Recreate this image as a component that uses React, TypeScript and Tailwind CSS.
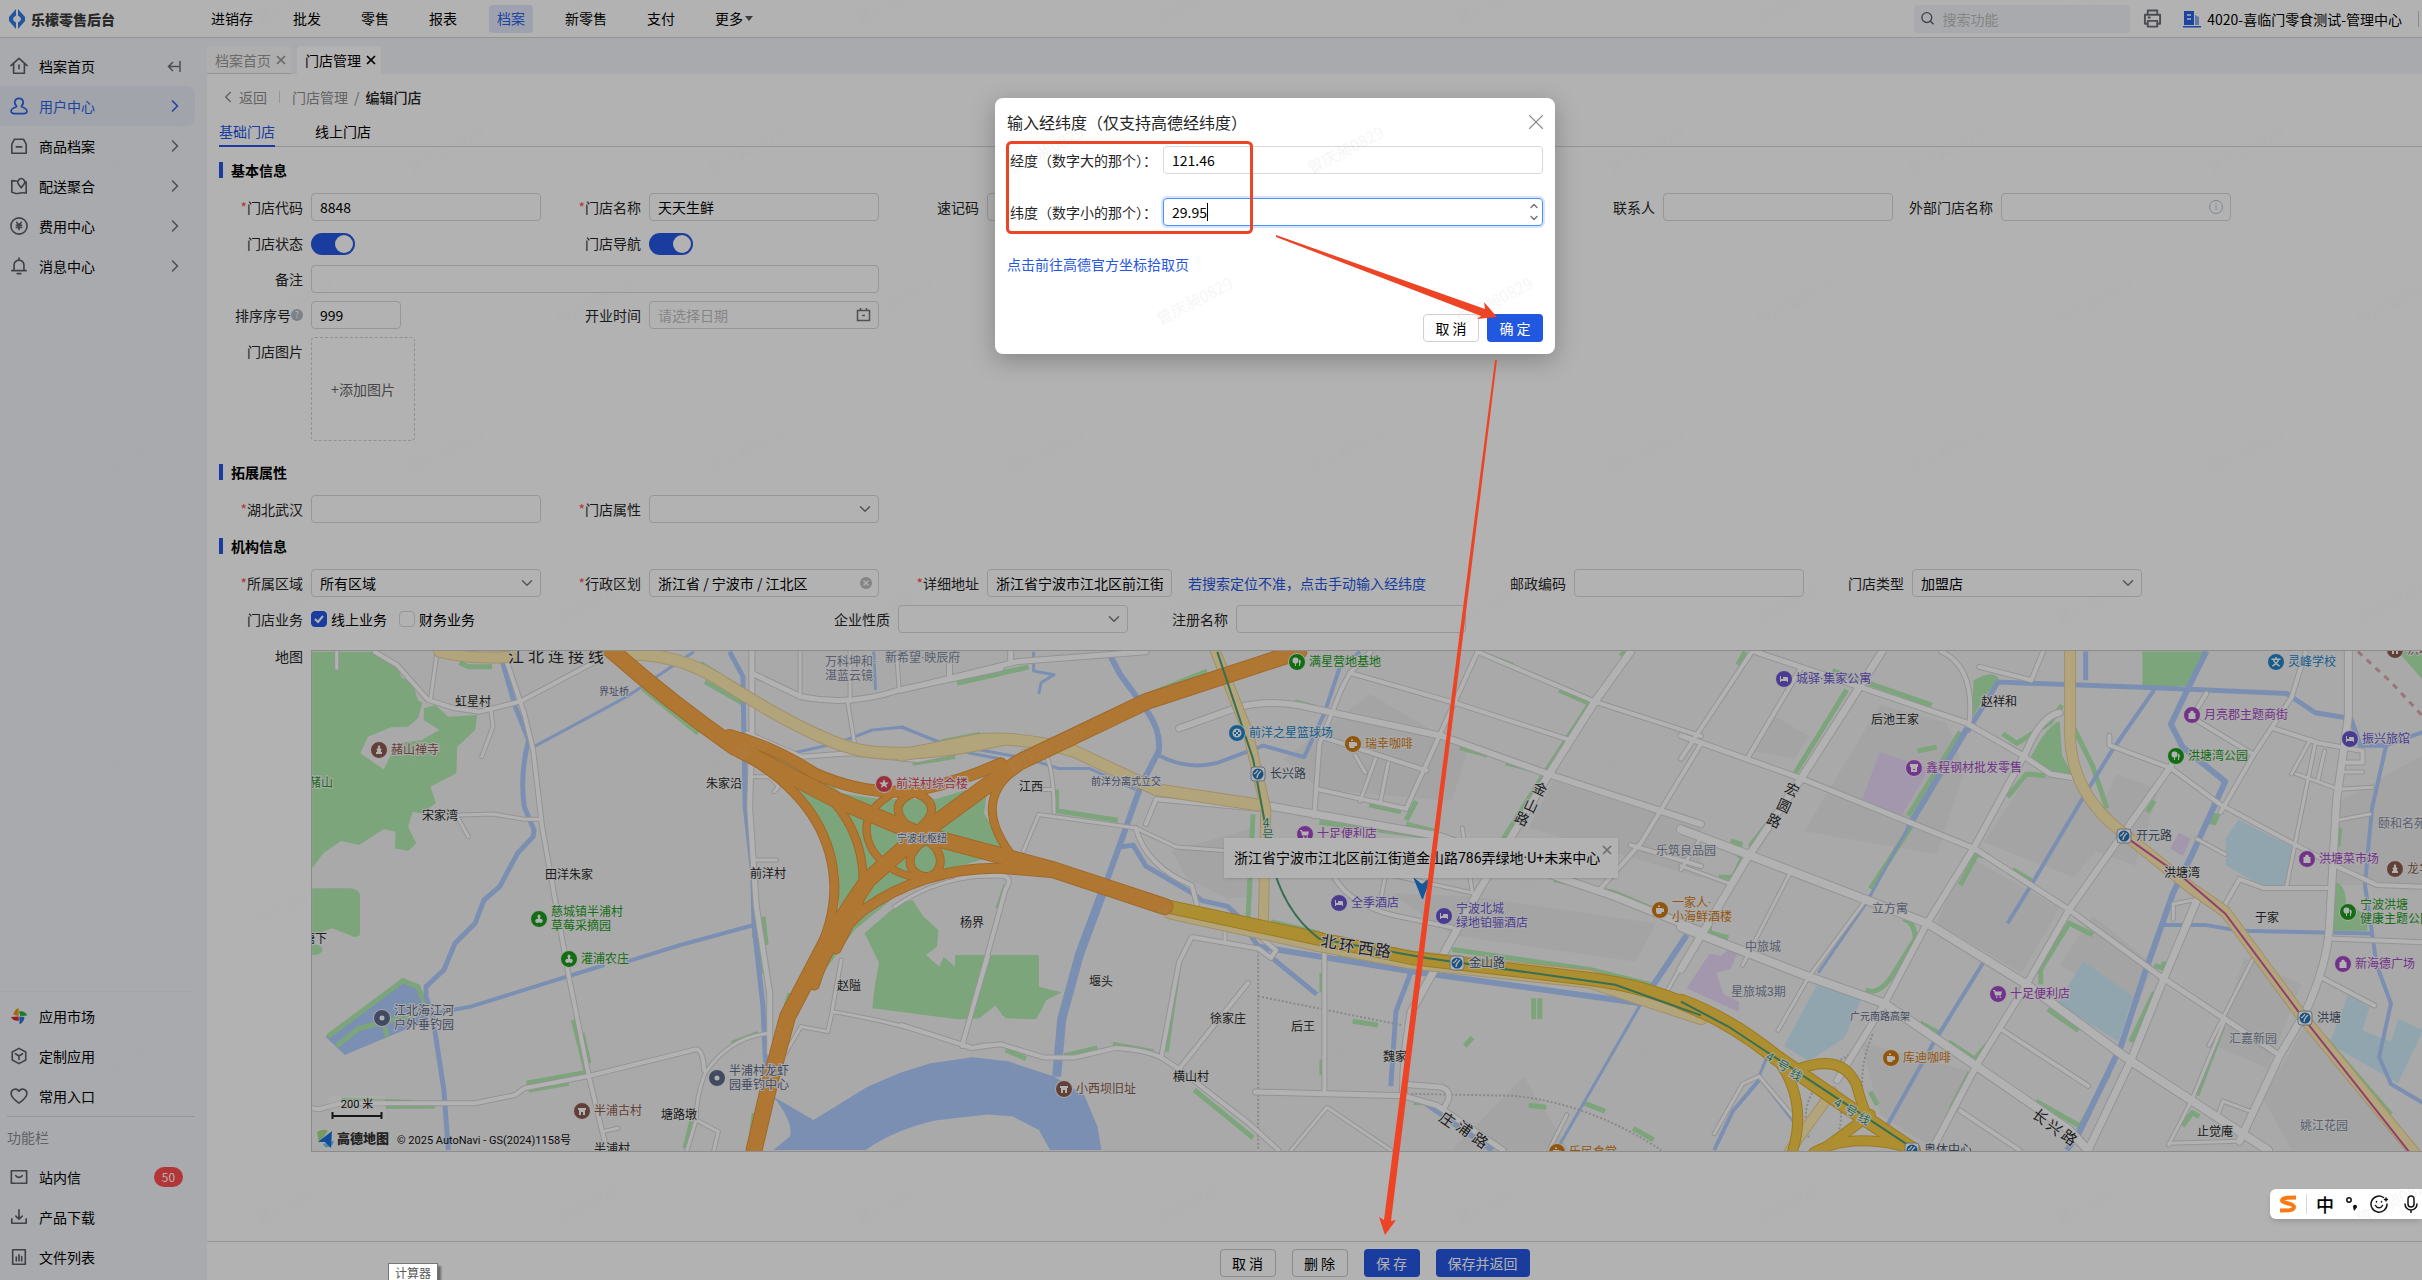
import { useId, useState } from 'react';
import type { ReactNode } from 'react';
import clsx from 'clsx';
import { ChevronDown, ChevronLeft, ChevronRight, ChevronUp, X } from 'lucide-react';

const NAV = ['进销存', '批发', '零售', '报表', '档案', '新零售', '支付'];

type IconName =
  | 'home' | 'user' | 'goods' | 'delivery' | 'fee' | 'bell'
  | 'market' | 'custom' | 'heart' | 'mail' | 'download' | 'files';

const ICONS: Record<IconName, ReactNode> = {
  home: <path d="M1 9.500 10 1.500l9 8M4 7.500V18h12V7.500M10 9v4" />,
  user: <path d="M10 1.500a4.600 4.600 0 0 1 3 8.200c-.6.600-.4 1 .4 1.300C17 12.200 18.800 13.800 18.800 15.800c0 1.800-1.500 2.700-3.800 2.700H5c-2.300 0-3.800-.9-3.800-2.700 0-2 1.800-3.600 5.400-4.800.8-.3 1-.7.4-1.300a4.600 4.600 0 0 1 3-8.200Z" />,
  goods: <path d="M5 2.500h10L18 8v10H2V8ZM7 11h6" />,
  delivery: <path d="M7 4.500 2 4v13c3 .5 5 2 8 1s5-.5 8 0V5.500h-1.500M12.500 12 9.500 8a3.800 3.800 0 1 1 6 0Z" />,
  fee: <path d="M10 1a9 9 0 1 1 0 18 9 9 0 0 1 0-18ZM7.500 6 10 9l2.500-3M7 9.300h6M7 11.600h6M10 9v5" />,
  bell: <path d="M4.500 15V9a5.500 5.500 0 0 1 11 0v6M2 15.200h16M10 1.200v2M8 18.500h4" />,
  market: (
    <g stroke="none">
      <path fill="#e89a14" d="M9.500 1v9L4 8.500C4 5 6.500 2 9.500 1Z" />
      <path fill="#2fae35" d="M10 5c4-1 8 1 9 4.500L11.500 10Z" />
      <path fill="#2779d6" d="M10.500 10.500 16 11c0 4-2.500 7-5.500 8Z" />
      <path fill="#dc2a2a" d="M1 11l8.500-.5L10 15C6 16 2.500 14 1 11Z" />
    </g>
  ),
  custom: <path d="M10 1.500 17.500 5.500v9L10 18.500 2.500 14.500v-9ZM6 7.500l4 2.500 4-2.500M10 10v4" />,
  heart: <path d="M10 18C5 14.500 1.200 11 1.200 7.300c0-5.200 6.300-6.500 8.800-2.600 2.500-3.900 8.800-2.600 8.800 2.600C18.800 11 15 14.500 10 18Z" />,
  mail: <path d="M1.500 3h17v14h-17ZM6.500 8.500c2 2.500 5 2.500 7 0" />,
  download: <path d="M10 2v10M6.500 9l3.500 3.500L13.500 9M2 12v5h16v-5" />,
  files: <path d="M3 2h14v16H3ZM7 10v4.500M10 7.500v7M13 9.500v5" />,
};

function SideIcon({ name }: { name: IconName }) {
  return (
    <svg className="h-[18px] w-[18px]" viewBox="0 0 20 20" fill="none" stroke="currentColor" strokeWidth="1.800" strokeLinejoin="round" strokeLinecap="round">
      {ICONS[name]}
    </svg>
  );
}

function SideItem({ icon, text, active, children }: { icon: IconName; text: string; active?: boolean; children?: ReactNode }) {
  return (
    <a href="#" className={clsx('mr-3 flex h-10 items-center rounded-r-lg px-[10px]', active ? 'bg-[#e9ebf7] text-[#2a62e6]' : 'text-black')}>
      <span className={clsx('mr-[11px]', !active && 'text-[#5b5e69]')}>
        <SideIcon name={icon} />
      </span>
      <span className="flex-1">{text}</span>
      {children}
    </a>
  );
}

function Field({ label, required, className, hint, children }: {
  label: string;
  required?: boolean;
  className?: string;
  hint?: boolean;
  children: (id: string) => ReactNode;
}) {
  const id = useId();
  return (
    <div className={clsx('flex', className ?? 'w-[322px]')}>
      <label htmlFor={id} className="mr-2 flex h-7 w-[84px] shrink-0 items-center justify-end whitespace-nowrap text-[#262626]">
        {required && <span className="text-[#ff4d4f]">*</span>}
        {label}
        {hint && <span className="flex h-3 w-3 items-center justify-center rounded-full bg-[#b4bac6] text-[9px] leading-3 text-white">?</span>}
      </label>
      {children(id)}
    </div>
  );
}

const inputCls = 'h-7 w-full min-w-0 rounded border border-[#d9d9d9] bg-white px-2 text-black outline-none placeholder:text-[#bfbfbf]';

function SelectBox({ id, value }: { id: string; value: string }) {
  return (
    <div className="relative min-w-0 flex-1">
      <select id={id} className={clsx(inputCls, 'appearance-none')} defaultValue={value}>
        <option>{value}</option>
      </select>
      <ChevronDown className="pointer-events-none absolute top-[5px] right-[5px] h-[18px] w-[18px] text-[#7a7a7a]" />
    </div>
  );
}

function Toggle({ id }: { id: string }) {
  const [on, setOn] = useState(true);
  return (
    <button
      id={id}
      type="button"
      role="switch"
      aria-checked={on}
      onClick={() => setOn(!on)}
      className={clsx('mt-1 flex h-[22px] w-11 items-center rounded-full p-[2px]', on ? 'justify-end bg-[#2557e2]' : 'justify-start bg-gray-300')}
    >
      <span className="h-[18px] w-[18px] rounded-full bg-white" />
    </button>
  );
}

function SectionTitle({ children }: { children: ReactNode }) {
  return (
    <h2 className="my-[15px] flex h-4 items-center gap-2 font-bold text-black">
      <span className="h-4 w-1 bg-[#2557e2]" />
      {children}
    </h2>
  );
}

/* ---------- map ---------- */

type Line = [width: number, d: string];
type Tile = {
  transform: string;
  blocks: string[];
  parks: string[];
  lakes: string[];
  pools: string[];
  malls: string[];
  rivers: Line[];
  verges: string[];
  streets: Line[];
  dotted: string[];
  pale: Line[];
  trunk: Line[];
  highway: Line[];
};

const TILES: Tile[] = [
  {
    transform: 'translate(300 640) scale(0.4464 0.3333)',
    blocks: [],
    parks: [
      'M25 35H165L215 80 225 112 250 130 262 180 272 190 262 235 240 260 202 262 150 290 133 340 185 388 215 310 270 300 310 270 275 240 275 205 300 195 330 230 395 225 390 270 350 320 348 400 290 440 302 490 270 520 250 515 240 560 258 610 240 633 210 625 212 575 185 568 130 615 90 603 50 640 25 685Z',
      'M25 745H112Q132 750 132 765V885Q120 896 110 886L70 865 25 885ZM25 912Q50 915 48 930T25 945Z',
      'M1110 440 1000 320 1130 370 1210 460 1300 478 1420 478 1540 430 1530 520 1584 638 1440 690 1340 760 1240 870 1150 1035 1205 860 1205 700 1170 560Z',
      'M1370 780 1395 830 1428 870 1425 920 1400 945 1430 980 1440 950 1465 980V945H1653V1040L1704 1057 1670 1080 1647 1138 1578 1135 1555 1097 1520 1135 1470 1138 1280 1105 1285 1040 1295 970 1270 900 1262 880 1340 790Z',
    ],
    lakes: [
      'M55 1190 228 1018 265 1035 285 1140 98 1245Z',
      'M1344 1298 1410 1270 1504 1252 1584 1264 1687 1310 1755 1367 1784 1459 1793 1530H1678L1653 1470 1595 1430 1538 1424 1420 1442Q1330 1470 1265 1530H1058L1095 1490Q1105 1450 1058 1370L1148 1440 1270 1340Z',
    ],
    pools: [],
    malls: [],
    rivers: [
      [5, 'M450 60 480 200 510 300Q490 400 500 500L522 570 520 590 485 640 445 740 410 780 390 850 345 910 320 990 280 1040V1070L295 1130 320 1350 330 1530'],
      [3, 'M522 320 730 170 880 35'],
      [5, 'M960 35 990 110 995 500 1012 700 1015 860 1035 1100 1040 1250 1055 1380'],
      [4, 'M1015 855 850 915 730 965M680 975 500 1050 380 1100 300 1120'],
      [3, 'M1050 355 1200 310 1280 270 1345 262 1400 290 1440 310 1500 340 1568 357M1283 35 1287 150'],
    ],
    verges: [
      'M355 68 375 80H428', 'M895 70 990 150M905 125 990 190M1075 220 1200 300', 'M765 145 890 280M1370 370 1465 350M1470 130 1568 100',
      'M1440 308 1520 285', 'M610 1140 640 1300M630 1180 645 1270', 'M505 1330 635 1298M510 1350 600 1330M90 1380 255 1388M190 1400 300 1398',
      'M1015 880 1035 1000M1035 830 1042 915', 'M875 1445 860 1525M965 1210 1025 1180M1080 1130 1095 1060M1015 1420 1005 1530',
      'M80 1218 130 1165 265 1120M188 1160 192 1190M60 1190 228 1022 262 1040 285 1120',
    ],
    streets: [
      [5, 'M165 35 215 75 285 180 345 205 400 215 490 185 680 50'],
      [4, 'M305 35 290 180M80 35V85M425 205 430 260 405 350'],
      [5, 'M460 60 500 220 520 330 540 560 600 1010 645 1310 685 1530'],
      [4, 'M350 530 375 590M355 525 430 522 500 538H535'],
      [5, 'M25 1405 40 1408 90 1390H390L480 1365 500 1345 645 1308 885 1228Q900 1228 903 1290'],
      [4, 'M1050 1180Q960 1190 905 1300 885 1370 885 1440L865 1530M885 1440 935 1475 925 1530M675 1475 710 1465'],
      [6, 'M1010 35V280L1005 500 1020 800 1050 1060V1240'],
      [4, 'M1015 410H1050L1070 440 1060 455M1018 660H1065'],
      [5, 'M1000 280 1120 350 1230 340 1380 360 1568 310'],
      [6, 'M1010 100 1120 170Q1230 200 1340 150L1568 85'],
      [4, 'M1118 35V160M1230 35V185M1225 190 1240 310M1455 35V110M1335 50 1340 150'],
      [4, 'M1120 1160 1180 1175 1190 1115Q1370 1155 1500 1225L1530 1215H1568M1210 960 1190 1110M1540 950 1480 1215M1085 1240 1120 1160'],
      [4, 'M1330 800Q1430 705 1568 705'],
    ],
    dotted: [],
    pale: [[11, 'M310 35Q380 60 470 50'], [12, 'M730 42Q850 40 950 130 1150 300 1250 330 1370 360 1568 300']],
    trunk: [],
    highway: [
      [16, 'M690 25Q830 190 970 320L1200 480 1380 580 1687 690 1935 800'],
      [16, 'M2235 35 1893 185 1607 368 1380 590 1270 720 1180 900 1090 1130 1050 1330 1015 1530'],
      [11, 'M960 285Q1060 320 1150 400 1250 460 1350 455 1450 440 1568 370'],
      [9, 'M1000 350Q1190 500 1195 740 1195 850 1150 960'],
      [8, 'M1150 430Q1270 560 1258 760 1240 830 1200 930'],
      [10, 'M1150 1035Q1180 900 1260 810 1400 680 1568 685L1700 700'],
      [8, 'M1615 375Q1490 480 1600 660'],
      [8, 'M1375 458C1420 480 1430 520 1375 575C1320 520 1330 480 1375 458'],
      [8, 'M1400 600C1450 640 1435 710 1400 710C1355 700 1350 640 1400 600'],
      [7, 'M1320 465Q1240 530 1280 630 1320 710 1400 715'],
    ],
  },
  {
    transform: 'translate(900 560) scale(0.5102 0.3827)',
    blocks: ['M750 520 920 350 1110 500 1080 630 820 600Z', 'M1280 570 1568 700V830L1230 700Z', 'M960 870 1130 880 1480 950 1440 1050 1080 980Z', 'M530 760 690 700V880L640 885 560 830Z', 'M1080 1542 1220 1350 1310 1542Z'],
    parks: [],
    lakes: [],
    pools: [],
    malls: [],
    rivers: [
      [6, 'M410 250 430 300 485 400Q510 450 505 500L470 590 430 740 400 850'],
      [9, 'M403 840 350 1030 315 1200 305 1350'],
      [4, 'M505 510Q560 550 620 530L710 485 790 515 830 400 860 280 900 240'],
      [5, 'M430 750 455 745 480 800 570 870 590 890 640 905 660 930 700 1010 815 1135'],
      [6, 'M700 1010 1000 1075 1450 1158M1540 980 1450 1160'],
      [5, 'M1000 1075 970 1180 960 1375'],
      [3, 'M1450 1160 1290 1530'],
      [3, 'M0 435 80 480 170 500 250 520 310 545H370L460 600M260 240V290L300 300 275 320 270 350'],
      [6, 'M1030 1420 1160 1542'],
    ],
    verges: [
      'M110 320 250 280', 'M470 360 600 290M80 475 155 455', 'M305 600V655L425 680', 'M772 370 812 385M918 640 980 658',
      'M990 680 1010 630M990 690 1050 710', 'M725 945 820 975M1080 1018 1350 1070 1470 1110', 'M855 1030 930 1045',
      'M520 1285 545 1050M205 1280 245 1303M320 1295 385 1275M415 1265 495 1285M575 1385 690 1510M825 1080V1130M825 1305V1345',
      'M1240 1145V1200M1252 1145V1200M1105 1270 1120 1248M885 1205 935 1215M1020 1130 1030 1100M1230 1425 1265 1430M1340 1420 1380 1440M1435 1485 1475 1515M1005 1418H1030L1110 1500',
      'M1180 730 1260 560 1350 375 1290 340M1095 490 1150 510M1185 530 1260 555M1140 245 1200 275M1410 250 1420 240M1320 455 1350 375',
      'M200 1190 215 1130M190 910 205 850M820 685 1050 725M1280 835 1400 870 1568 965', 'M690 665 680 940',
    ],
    streets: [
      [6, 'M0 340 230 265 480 240M95 240V300M215 240V268'],
      [7, 'M545 440 660 385Q720 365 780 380L1060 460 1270 560 1568 690'],
      [5, 'M920 240 880 295Q860 340 845 400L820 480 810 670M880 295 1090 375 1310 470M1130 240 990 650'],
      [5, 'M1130 240 1360 370 1568 460M820 460 1030 550M820 600 990 650'],
      [8, 'M1430 240 1360 370 1270 560 1130 870 1000 1180Q985 1290 985 1390'],
      [8, 'M710 640 1050 720 1400 880 1568 970'],
      [5, 'M1568 480 1450 740 1370 860M1430 745 1568 800M480 690 500 625 700 650'],
      [4, 'M240 500H280Q300 540 300 660M270 665 460 700 540 750 640 760M240 760 270 665M280 600H298'],
      [5, 'M460 700Q480 800 570 850L580 900M850 830Q880 900 970 930L1080 960'],
      [4, 'M890 510 910 555M900 630 930 520M940 630 955 530M1100 700 1120 870 950 820 940 890M635 960V1000'],
      [5, 'M100 825H200Q220 830 205 860L120 1270M0 1215 140 1275 195 1265 280 1300H340L420 1275Q480 1280 510 1300L545 1330 680 1470 740 1542'],
      [5, 'M510 1300 545 1050 570 985 700 1015 725 1040 735 1020 700 980M680 1105 545 1330M830 1010V1390'],
      [6, 'M695 1390 985 1400 1050 1425 1180 1542M985 1370 1060 1378Q1085 1390 1065 1430'],
      [4, 'M765 1542 835 1430 960 1542M1305 1450 1270 1542M1568 970 1500 1130'],
    ],
    dotted: ['M700 1000V1542', 'M700 1140 980 1215', 'M1000 1395 1200 1400Q1350 1420 1490 1542'],
    pale: [[12, 'M0 510 150 470Q240 460 340 500L500 600 700 640'], [10, 'M615 235 680 450 715 650 710 960'], [18, 'M530 915 820 1000 1000 1045 1350 1095 1568 1190']],
    trunk: [[13, 'M510 902 820 990 1000 1040 1350 1095Q1470 1115 1568 1180']],
    highway: [],
  },
  {
    transform: 'translate(1680 640) scale(0.4733 0.3827)',
    blocks: [
      'M420 170 560 215 600 340 540 560 260 500Z', 'M740 340 850 380 900 520 830 620 640 530Z', 'M1380 430 1568 300V640H1370Z',
      'M920 350 1010 390 960 590 850 540Z', 'M600 560 800 700 720 870 540 740Z', 'M1190 830 1310 900 1240 1120 1130 1060Z', 'M1320 1000 1540 1333H1290L1230 1200Z',
      'M200 200 270 250 240 310 150 290ZM870 720 1000 850 960 960 800 850Z', 'M380 1050 620 1130 540 1333 420 1240Z',
    ],
    parks: [
      'M975 30H1115L1070 120H975Z', 'M618 105Q660 75 672 102L640 150 615 205Z', 'M800 212 805 300 828 355H790L738 310Q770 225 800 212Z',
      'M1380 630Q1405 640 1405 690L1450 720V760H1376Z', 'M1515 30H1568V105Z', 'M1120 450 1140 455 1130 485 1112 480Z',
    ],
    lakes: [],
    pools: ['M1178 470 1290 540 1278 645 1225 640 1152 590 1150 520Z', 'M850 840 955 930 925 1050 795 950Z', 'M290 895 380 940 345 1040 270 1100 218 1060Z', 'M1410 925 1455 960 1440 1020 1500 1050 1515 990 1568 1020 1515 1158 1475 1130 1370 1055Z'],
    malls: ['M420 293 525 335 465 460 383 415Z', 'M60 820 85 825 100 808 120 815 105 860 75 870 90 925 122 945V972L12 910Z', 'M1052 503 1077 520 1060 565 1034 545Z'],
    rivers: [
      [6, 'M605 230 480 490'], [3, 'M480 490 390 690 290 870M185 1080 165 1140'],
      [5, 'M855 30V105M640 170 670 110 1000 125 1280 140 1340 190 1415 205 1435 275 1490 275M605 240 650 150'],
      [4, 'M1490 275 1460 440 1445 640 1470 850 1500 950 1475 1090 1500 1160 1568 1210M1490 275 1568 240'],
      [6, 'M1110 30 1070 130 1035 220 1060 280 1150 370 1080 560 1040 660 980 870 930 1060 840 1290 815 1333'],
      [4, 'M1000 130 910 290 860 390 740 640 690 740M640 840 530 1060 435 1270'],
      [4, 'M1015 745H1110L1180 760 1460 767M165 1150 110 1230 70 1333M165 1140 240 1260'],
    ],
    verges: [
      'M350 130 240 350M320 80 530 170M120 65 135 30', 'M260 350 220 420 145 540', 'M105 525 130 535M80 620H110L130 570 110 550', 'M60 740V765L100 778',
      'M500 290 540 280M480 460 590 240', 'M400 650 490 480', 'M590 640 625 560 640 565M700 600 740 628', 'M690 410 730 350 770 355M680 245 710 270 780 215 805 170',
      'M390 915Q420 930 450 870L495 780Q495 740 470 728', 'M505 1000 550 1030M565 1050 620 1095 680 1010', 'M570 1225 610 1130',
      'M775 965 840 1020M760 900V860L820 740 870 770', 'M1000 850 1020 858V840M950 1050 1000 920', 'M1060 1270 1080 1235 1095 1245M1090 1190 1145 1010',
      'M840 1280 905 1130M750 1205 850 1275M830 230 870 330 900 440M985 450 1000 420M1392 490 1388 540M920 280 955 300', 'M400 1180 415 1215M1360 1040 1500 1240',
    ],
    streets: [
      [6, 'M155 30 600 215 720 300 780 350 830 360'],
      [8, 'M425 30 260 350 140 570 0 860'],
      [9, 'M0 495 140 560 520 740 730 900 950 1100 1240 1333'],
      [6, 'M0 250 250 360 470 470 620 545 820 705 1020 885 1265 1085'],
      [9, 'M0 750 270 880 430 950 620 1110 820 1280 860 1333'],
      [5, 'M0 310 150 30M250 80 140 310M550 30Q620 70 610 210M630 70 740 105 765 30'],
      [7, 'M800 190Q760 200 730 290L620 540 520 740 430 950 330 1150'],
      [7, 'M1035 330 820 705 730 900 625 1110 530 1333'],
      [8, 'M1090 680 1020 885 950 1100 860 1333'],
      [4, 'M1210 830 1115 1060M1150 990 1080 1200 1030 1320'],
      [8, 'M1410 30V200L1385 420 1370 750Q1365 850 1320 970L1265 1085 1180 1310'],
      [5, 'M905 250V275L1035 335 1140 430 1290 530 1400 600 1470 640 1568 645'],
      [5, 'M1320 30 1290 150 1210 300 1140 450M1250 230 1350 270 1440 290V320H1395M1090 210 1210 300M1110 140 1090 180'],
      [4, 'M1340 270 1280 640M1300 350 1390 390 1460 385M1390 470 1455 455M1395 345H1440M1330 260 1290 350M1360 290 1345 370'],
      [5, 'M1180 625 1230 648H1370M1370 780 1568 790M1350 880 1465 955M680 1020 860 1165M590 1230 715 1333M1180 625 1150 690'],
      [4, 'M230 610 130 850M390 680 270 880 205 1020M0 590 110 640M1090 520 1150 560M1040 730V690L1080 680M40 520 0 600'],
      [4, 'M1135 1240 1145 1205 1210 1235M1030 1315 1180 1310M70 1290 130 1160 165 1140 240 1250'],
    ],
    dotted: ['M405 1030Q370 1130 390 1230', 'M270 1110Q350 1110 370 1060', 'M270 1300Q250 1220 290 1160M330 1300Q350 1220 320 1200'],
    pale: [[11, 'M822 30V250Q825 400 930 500L1080 650 1150 710 1310 980 1550 1340'], [10, 'M230 1333 320 1180']],
    trunk: [
      [15, 'M0 945Q100 990 200 1090L340 1210 490 1333'],
      [10, 'M200 1090Q270 1200 235 1340'],
      [10, 'M250 1120Q340 1080 370 1160 385 1230 400 1260'],
      [10, 'M280 1340Q350 1290 460 1320M290 1340 400 1240'],
    ],
    highway: [],
  },
];

const METRO: [string, string, string][] = [
  [TILES[1].transform, '#4f9f78', 'M620 240 690 520 715 700Q730 900 820 990L1030 1040 1400 1110 1568 1190'],
  [TILES[2].transform, '#4f9f78', 'M0 945 100 1010 480 1320'],
  [TILES[2].transform, '#d15aa0', 'M940 515 1060 620 1150 715 1310 980 1540 1340'],
];

// old railway in the north-east corner
const RAIL = 'M1430 30 1500 110 1568 200';

const INK = '#2b2b2b';
const SLATE = '#5f6b8c';
const GREY = '#8088a0';
const GREEN = '#1c9c1c';
const BROWN = '#8e5c4f';
const PURPLE = '#a548c6';
const INDIGO = '#6a55d0';
const BLUE = '#2086cc';
const ORANGE = '#d27a12';
const RED = '#dd4658';

// x and y: left edge and vertical centre of the first line
type PlaceLabel = [x: number, y: number, color: string, size: number, ...lines: string[]];

const LABELS: PlaceLabel[] = [
  [507, 657, INK, 16, '江 北 连 接 线'],
  [454, 703, INK, 12, '虹星村'], [598, 692, SLATE, 10, '界址桥'], [308, 784, GREEN, 12, '赭山'], [421, 817, INK, 12, '宋家湾'],
  [705, 785, INK, 12, '朱家沿'], [544, 876, INK, 12, '田洋朱家'], [749, 875, INK, 12, '前洋村'], [959, 924, INK, 12, '杨界'],
  [836, 987, INK, 12, '赵隘'], [302, 940, INK, 12, '塘下'], [660, 1116, INK, 12, '塘路墩'], [593, 1150, INK, 12, '半浦村'],
  [896, 839, SLATE, 10, '宁波北枢纽'], [824, 663, GREY, 12, '万科坤和·', '湛蓝云镜'], [884, 659, GREY, 12, '新希望·映辰府'],
  [1090, 782, SLATE, 10, '前洋分离式立交'], [1018, 788, INK, 12, '江西'], [1088, 983, INK, 12, '堰头'], [1209, 1020, INK, 12, '徐家庄'],
  [1290, 1028, INK, 12, '后王'], [1382, 1058, INK, 12, '魏家'], [1172, 1078, INK, 12, '横山村'], [1655, 852, GREY, 12, '乐筑良品园'],
  [1870, 721, INK, 12, '后池王家'], [1980, 703, INK, 12, '赵祥和'], [1871, 910, GREY, 12, '立方寓'], [1744, 948, GREY, 12, '中旅城'],
  [1730, 993, GREY, 12, '星旅城3期'], [1849, 1017, SLATE, 10, '广元南路高架'], [2377, 825, GREY, 12, '颐和名苑'], [2163, 874, INK, 12, '洪塘湾'],
  [2254, 919, INK, 12, '于家'], [2228, 1040, GREY, 12, '汇嘉新园'], [2299, 1127, GREY, 12, '姚江花园'], [2196, 1133, INK, 12, '止觉庵'],
];

// single characters that run along a road
const ROAD_CHARS: [string, number, number, number, string, number][] = [
  ['北', 1328, 942, 8, INK, 16], ['环', 1346, 946, 8, INK, 16], ['西', 1365, 949, 8, INK, 16], ['路', 1382, 951, 8, INK, 16],
  ['金', 1539, 789, 25, INK, 14], ['山', 1530, 806, 25, INK, 14], ['路', 1521, 819, 25, INK, 14],
  ['庄', 1446, 1120, 35, INK, 15], ['浦', 1463, 1129, 35, INK, 15], ['路', 1479, 1141, 35, INK, 15],
  ['宏', 1791, 790, 25, INK, 14], ['圆', 1783, 806, 25, INK, 14], ['路', 1773, 821, 25, INK, 14],
  ['长', 2039, 1117, 38, INK, 15], ['兴', 2053, 1128, 38, INK, 15], ['路', 2068, 1138, 38, INK, 15],
  ['4', 1265, 823, 0, '#3d9468', 12], ['号', 1267, 836, 0, '#3d9468', 12],
  ['4', 1769, 1057, 30, '#3d9468', 12], ['号', 1782, 1066, 30, '#3d9468', 12], ['线', 1795, 1075, 30, '#3d9468', 12],
  ['4', 1837, 1103, 30, '#3d9468', 12], ['号', 1850, 1111, 30, '#3d9468', 12], ['线', 1863, 1119, 30, '#3d9468', 12],
];

const GLYPHS = {
  tower: 'M0-5 1.500-3H1V-2L3 0H2V2H3V4H-3V2H-2V0H-3L-1-2V-3H-1.500Z',
  gate: 'M-4-3H4V-1H3V4H1V1H-1V4H-3V-1H-4Z',
  star: 'M0-5 1.400-1.500 5-1.500 2.200.8 3.200 4 0 2-3.200 4-2.200.8-5-1.500-1.400-1.500Z',
  farm: 'M0-4.500A2 2 0 0 1 1-1.200V0A2 2 0 1 1 .6 3.500H-.6A2 2 0 1 1-1 0V-1.200A2 2 0 0 1 0-4.500Z',
  tree: 'M-1-4.500A2.500 3 0 0 1-1 1.500V4H-2V1.500A2.500 3 0 0 1-2-4.500ZM2-2.500A2 2.500 0 0 1 3 2V4H2V2Z',
  dot: 'M0-2.500A2.500 2.500 0 1 1 0 2.500 2.500 2.500 0 0 1 0-2.500Z',
  ball: 'M0-4.500A4.500 4.500 0 1 1 0 4.500 4.500 4.500 0 0 1 0-4.500ZM-1-3V3H1V-3ZM-3-1V1H3V-1Z',
  cup: 'M-4-2H2V-1.500H4V2H2L1 4H-3L-4 2ZM-2-4.500H0V-3H-2Z',
  bag: 'M-3.500-2H-2A2 2.500 0 0 1 2-2H3.500V4H-3.500Z',
  cart: 'M-5-4H-3L-2.500-2.500H4L3 1.500H-3L-4-3H-5ZM-2 2.500H-.5V4H-2ZM1.500 2.500H3V4H1.500Z',
  shop: 'M-4-4H4V-1H3V4H-3V-1H-4ZM-1 1V2H1V1Z',
  bed: 'M-4-3H-3V0H-1V-2H3Q4-2 4-1V3H3V2H-3V3H-4Z',
  school: 'M-.7-5H.7V-3.500H4.500V-2H3Q2.500 0 1 1.500L4 3.500 3.200 4.800 0 2.500-3.200 4.800-4 3.500-1 1.500Q-2.500 0-3-2H-4.500V-3.500H-.7ZM-1.500-2Q-1-.5 0 .5 1-.5 1.500-2Z',
};

type Poi = [x: number, y: number, glyph: keyof typeof GLYPHS, color: string, ...lines: string[]];

const POIS: Poi[] = [
  [378, 750, 'tower', BROWN, '赭山禅寺'],
  [883, 784, 'star', RED, '前洋村综合楼'],
  [538, 919, 'farm', GREEN, '慈城镇半浦村', '草莓采摘园'],
  [568, 959, 'farm', GREEN, '灌浦农庄'],
  [381, 1018, 'dot', SLATE, '江北海江河', '户外垂钓园'],
  [716, 1078, 'dot', SLATE, '半浦村龙虾', '园垂钓中心'],
  [581, 1111, 'gate', BROWN, '半浦古村'],
  [1296, 662, 'tree', GREEN, '满星营地基地'],
  [1236, 733, 'ball', BLUE, '前洋之星篮球场'],
  [1352, 744, 'cup', ORANGE, '瑞幸咖啡'],
  [1304, 834, 'cart', PURPLE, '十足便利店'],
  [1063, 1089, 'gate', BROWN, '小西坝旧址'],
  [1338, 903, 'bed', INDIGO, '全季酒店'],
  [1443, 916, 'bed', INDIGO, '宁波北城', '绿地铂骊酒店'],
  [1659, 910, 'cup', ORANGE, '一家人·', '小海鲜酒楼'],
  [1556, 1152, 'cup', ORANGE, '乐民食堂'],
  [1783, 679, 'bed', INDIGO, '城驿·集家公寓'],
  [1913, 768, 'shop', PURPLE, '鑫程钢材批发零售'],
  [1997, 994, 'cart', PURPLE, '十足便利店'],
  [1890, 1058, 'cup', ORANGE, '库迪咖啡'],
  [2275, 662, 'school', BLUE, '灵峰学校'],
  [2191, 715, 'bag', PURPLE, '月亮郡主题商街'],
  [2349, 739, 'bed', INDIGO, '振兴旅馆'],
  [2175, 756, 'tree', GREEN, '洪塘湾公园'],
  [2306, 859, 'bag', PURPLE, '洪塘菜市场'],
  [2394, 869, 'tower', BROWN, '龙华禅寺'],
  [2347, 912, 'tree', GREEN, '宁波洪塘', '健康主题公园'],
  [2342, 964, 'bag', PURPLE, '新海德广场'],
  [2394, 650, 'gate', BROWN, '洪塘老街'],
];

const STATIONS: [number, number, string][] = [
  [1257, 774, '长兴路'], [1456, 963, '金山路'], [2123, 836, '开元路'], [2304, 1018, '洪塘'], [1911, 1150, '奥体中心'],
];

function MapText({ x, y, color, size, lines }: { x: number; y: number; color: string; size: number; lines: string[] }) {
  return (
    <>
      {lines.map((line, i) => (
        <text key={line} x={x} y={y - 1 + i * 14} fill={color} fontSize={size} dominantBaseline="central" stroke="#f5f5f5" strokeWidth="2" paintOrder="stroke">
          {line}
        </text>
      ))}
    </>
  );
}

function Roads({ kind, casing, fill }: { kind: 'streets' | 'pale' | 'trunk' | 'highway'; casing: string; fill: string }) {
  return (
    <g fill="none" strokeLinecap="round" strokeLinejoin="round">
      {[casing, fill].map((color, pass) =>
        TILES.map((tile) => (
          <g key={tile.transform + color} transform={tile.transform} stroke={color}>
            {tile[kind].map(([w, d]) => (
              <path key={d} d={d} strokeWidth={pass === 0 ? w + 1 : w - 1} vectorEffect="non-scaling-stroke" />
            ))}
          </g>
        )),
      )}
    </g>
  );
}

function StoreMap() {
  return (
    <svg
      className="block h-full w-full font-[Roboto,'Noto_Sans_CJK_SC',sans-serif]"
      viewBox="311 651 2111 500"
      preserveAspectRatio="xMinYMin slice"
      role="img"
      aria-label="地图"
    >
      <rect x="311" y="651" width="2400" height="500" fill="#f3f3f3" />
      {TILES.map((t) => (
        <g key={t.transform} transform={t.transform}>
          {t.blocks.map((d) => <path key={d} d={d} fill="#ebebeb" />)}
          {t.parks.map((d) => <path key={d} d={d} fill="#b2ecb1" />)}
          {t.lakes.map((d) => <path key={d} d={d} fill="#b1cdff" />)}
          {t.pools.map((d) => <path key={d} d={d} fill="#d0ecfb" />)}
          {t.malls.map((d) => <path key={d} d={d} fill="#e9d9f8" />)}
        </g>
      ))}
      <g fill="none" strokeLinejoin="round">
        {TILES.map((t) => (
          <g key={t.transform} transform={t.transform}>
            {t.verges.map((d) => <path key={d} d={d} stroke="#b2ecb1" strokeWidth="5" vectorEffect="non-scaling-stroke" />)}
            {t.rivers.map(([w, d]) => <path key={d} d={d} stroke="#b1cdff" strokeWidth={w} vectorEffect="non-scaling-stroke" />)}
            {t.dotted.map((d) => <path key={d} d={d} stroke="#c4c4c4" strokeWidth="2" strokeDasharray="2 2" vectorEffect="non-scaling-stroke" />)}
          </g>
        ))}
        <path d={RAIL} transform={TILES[2].transform} stroke="#f5f5f5" strokeWidth="3" vectorEffect="non-scaling-stroke" />
        <path d={RAIL} transform={TILES[2].transform} stroke="#dba9ae" strokeWidth="3" strokeDasharray="6 6" vectorEffect="non-scaling-stroke" />
      </g>
      <Roads kind="streets" casing="#d4d4d4" fill="#ffffff" />
      <Roads kind="pale" casing="#e8cf9b" fill="#ffecb0" />
      <Roads kind="trunk" casing="#dfb02f" fill="#f8cd48" />
      <Roads kind="highway" casing="#e6963a" fill="#fcab49" />
      {METRO.map(([transform, color, d]) => (
        <path key={d} transform={transform} d={d} fill="none" stroke={color} strokeWidth="2" vectorEffect="non-scaling-stroke" />
      ))}

      {LABELS.map(([x, y, color, size, ...lines]) => (
        <MapText key={`${x}-${y}`} x={x} y={y} color={color} size={size} lines={lines} />
      ))}
      {ROAD_CHARS.map(([ch, x, y, angle, color, size]) => (
        <text
          key={`${x}-${y}`}
          transform={`translate(${x} ${y}) rotate(${angle})`}
          fill={color}
          fontSize={size}
          textAnchor="middle"
          dominantBaseline="central"
          stroke="#f5f5f5"
          strokeWidth="2"
          paintOrder="stroke"
        >
          {ch}
        </text>
      ))}
      {POIS.map(([x, y, glyph, color, ...lines]) => (
        <g key={`${x}-${y}`}>
          <circle cx={x} cy={y} r="8.500" fill={color} stroke="#f5f5f5" strokeWidth="1" />
          <path d={GLYPHS[glyph]} transform={`translate(${x} ${y})`} fill="#fff" fillRule="evenodd" />
          <MapText x={x + 12} y={lines.length > 1 ? y - 6 : y + 1} color={color} size={12} lines={lines} />
        </g>
      ))}
      {STATIONS.map(([x, y, name]) => (
        <g key={name}>
          <rect x={x - 7} y={y - 7} width="14" height="14" rx="3" fill="#fff" stroke="#9aa3ad" />
          <circle cx={x} cy={y} r="5.500" fill="#2474b8" />
          <path d={`M${x - 1} ${y + 4}C${x - 1} ${y} ${x + 1} ${y - 1} ${x + 3} ${y - 3}M${x - 4} ${y}C${x - 2} ${y - 1} ${x - 1} ${y - 2} ${x} ${y - 4}`} fill="none" stroke="#fff" strokeWidth="1.300" />
          <MapText x={x + 12} y={y + 1} color="#4c5a72" size={12} lines={[name]} />
        </g>
      ))}

      <path d="M1412 877 1421 884 1430 877 1422 899H1421Z" fill="#1f7fe0" />

      {/* scale bar */}
      <rect x="328" y="1096" width="56" height="24" fill="#fff" fillOpacity=".3" />
      <text x="356" y="1104" fontSize="11" textAnchor="middle" dominantBaseline="central" fill="#111">200 米</text>
      <path d="M331.500 1112v7M380.500 1112v7M331 1116h50" stroke="#222" strokeWidth="2" fill="none" />

      <path d="M316 1132Q323 1128 327 1131L318 1143Z" fill="#a6dd8c" />
      <path d="M322 1144Q330 1141 333 1141 332 1148 324 1147Z" fill="#6fc9ee" />
      <path d="M317 1142 331 1131 330 1148 324 1142Z" fill="#1b6fe0" />
      <text x="336" y="1138" fontSize="13" fontWeight="900" dominantBaseline="central" fill="#333">高德地图</text>
      <text x="396" y="1140" fontSize="11" dominantBaseline="central" fill="#111">© 2025 AutoNavi - GS(2024)1158号</text>
    </svg>
  );
}

/* ---------- page ---------- */

function Header() {
  return (
    <header className="flex h-[38px] items-center border-b border-[#d6d6d6] bg-white">
      <a href="#" className="flex w-[203px] items-center pl-[9px] text-[#3b3b3b]">
        <svg className="mr-[6px] h-5 w-4" viewBox="0 0 16 20">
          <path d="M7 0v6.500Q4 8 4 10T7 13.500V20L0 12V8ZM9 0v6.500Q12 8 12 10T9 13.500V20L16 12V8Z" fill="#2f7ae5" />
        </svg>
        <span className="font-black">乐檬零售后台</span>
      </a>
      <nav className="flex gap-6">
        {NAV.map((item) => (
          <a key={item} href="#" className={clsx('flex h-7 items-center rounded px-2 pb-px', item === '档案' ? 'bg-[#e3e8fb] text-[#2a62e6]' : 'text-black')}>
            {item}
          </a>
        ))}
        <a href="#" className="flex h-7 items-center px-2 pb-px text-black">
          更多
          <svg className="ml-[2px] h-[5px] w-2" viewBox="0 0 8 5"><path d="M0 0h8L4 5Z" fill="#555" /></svg>
        </a>
      </nav>
      <label className="ml-auto flex h-7 w-[216px] items-center gap-2 rounded bg-[#f1f4f9] px-[7px]">
        <svg className="h-[15px] w-[15px]" viewBox="0 0 15 15" fill="none" stroke="#5b5e69" strokeWidth="1.500">
          <circle cx="6.500" cy="6.500" r="5.500" />
          <path d="m10.500 10.500 3.500 3.500" />
        </svg>
        <input aria-label="搜索功能" placeholder="搜索功能" className="w-full min-w-0 bg-transparent outline-none placeholder:text-[#bfbfbf]" />
      </label>
      <button type="button" aria-label="打印" className="ml-[13px]">
        <svg className="h-[19px] w-[19px]" viewBox="0 0 20 20" fill="none" stroke="#6c6f78" strokeWidth="2" strokeLinejoin="round">
          <path d="M5 6V1.500h10V6M4 15.500H2V6h16v9.500h-2M5 12.500h10v6H5ZM5 9h3" />
        </svg>
      </button>
      <svg className="ml-[21px] h-[18px] w-[18px]" viewBox="0 0 18 18">
        <path d="M1 1h10v14H1ZM0 16h18v1.500H0Z" fill="#2a62e6" />
        <path d="M12 5l4 2v8h-4Z" fill="#8fabf0" />
        <path d="M4 5h4M4 9h4" stroke="#fff" strokeWidth="1.500" />
      </svg>
      <span className="ml-[6px] text-black">4020-喜临门零食测试-管理中心</span>
      <span className="mr-[3px] ml-4 h-4 w-px bg-[#c8c8c8]" />
    </header>
  );
}

function Sidebar() {
  const arrow = <ChevronRight className="h-5 w-5 text-[#6c6f78]" strokeWidth={1.8} />;
  return (
    <aside className="flex w-[207px] shrink-0 flex-col pt-2 pb-[3px]">
      <SideItem icon="home" text="档案首页">
        <svg className="mr-1 h-[13px] w-[14px]" viewBox="0 0 14 13" fill="none" stroke="#6c6f78" strokeWidth="1.500"><path d="M13 1v11M12 6.500H2M6 2 1.500 6.500 6 11" /></svg>
      </SideItem>
      <SideItem icon="user" text="用户中心" active><ChevronRight className="h-5 w-5" /></SideItem>
      <SideItem icon="goods" text="商品档案">{arrow}</SideItem>
      <SideItem icon="delivery" text="配送聚合">{arrow}</SideItem>
      <SideItem icon="fee" text="费用中心">{arrow}</SideItem>
      <SideItem icon="bell" text="消息中心">{arrow}</SideItem>
      <div className="mt-auto mr-3 border-t border-[#ebedf1] pt-1" />
      <SideItem icon="market" text="应用市场" />
      <SideItem icon="custom" text="定制应用" />
      <SideItem icon="heart" text="常用入口" />
      <div className="mr-3 ml-[7px] flex h-[41px] items-center border-t border-[#d6d8dc] text-[#8a8c92]">功能栏</div>
      <SideItem icon="mail" text="站内信">
        <span className="mr-[2px] flex h-5 w-[29px] items-center justify-center rounded-full bg-[#ff4d4f] text-xs text-white">50</span>
      </SideItem>
      <SideItem icon="download" text="产品下载" />
      <SideItem icon="files" text="文件列表" />
    </aside>
  );
}

function StoreForm() {
  return (
    <form className="flex flex-1 flex-col" onSubmit={(e) => e.preventDefault()}>
      <div className="flex-1 overflow-hidden pl-3">
        <SectionTitle>基本信息</SectionTitle>
        <div className="flex flex-col gap-2">
          <div className="flex gap-4">
            <Field label="门店代码" required>{(id) => <input id={id} className={inputCls} defaultValue="8848" />}</Field>
            <Field label="门店名称" required>{(id) => <input id={id} className={inputCls} defaultValue="天天生鲜" />}</Field>
            <Field label="速记码">{(id) => <input id={id} className={inputCls} />}</Field>
            <Field label="联系电话">{(id) => <input id={id} className={inputCls} />}</Field>
            <Field label="联系人">{(id) => <input id={id} className={inputCls} />}</Field>
            <Field label="外部门店名称">
              {(id) => (
                <div className="relative flex-1">
                  <input id={id} className={inputCls} />
                  <span className="absolute top-[7px] right-2 flex h-[14px] w-[14px] items-center justify-center rounded-full border border-[#b9c0cf] text-[9px] text-[#b9c0cf]">i</span>
                </div>
              )}
            </Field>
          </div>
          <div className="flex gap-4">
            <Field label="门店状态">{(id) => <Toggle id={id} />}</Field>
            <Field label="门店导航">{(id) => <Toggle id={id} />}</Field>
          </div>
          <Field label="备注" className="w-[660px]">{(id) => <input id={id} className={inputCls} />}</Field>
          <div className="flex gap-4">
            <Field label="排序序号" hint>
              {(id) => <div className="w-[90px]"><input id={id} className={inputCls} defaultValue="999" /></div>}
            </Field>
            <Field label="开业时间">
              {(id) => (
                <div className="relative flex-1">
                  <input id={id} className={inputCls} placeholder="请选择日期" />
                  <svg className="absolute top-[6px] right-2 h-[15px] w-[15px]" viewBox="0 0 15 15" fill="none" stroke="#6c6f78" strokeWidth="1.500">
                    <path d="M1.500 3.500h12v10h-12ZM4.500 1v3M10.500 1v3M6 8.500h3" />
                  </svg>
                </div>
              )}
            </Field>
          </div>
          <Field label="门店图片">
            {(id) => (
              <button id={id} type="button" className="h-[104px] w-[104px] rounded border border-dashed border-[#d0d0d0] text-[#666]">+添加图片</button>
            )}
          </Field>
        </div>

        <div className="h-2" />
        <SectionTitle>拓展属性</SectionTitle>
        <div className="flex gap-4">
          <Field label="湖北武汉" required>{(id) => <input id={id} className={inputCls} />}</Field>
          <Field label="门店属性" required>{(id) => <SelectBox id={id} value="" />}</Field>
        </div>

        <SectionTitle>机构信息</SectionTitle>
        <div className="flex flex-col gap-2">
          <div className="flex gap-4">
            <Field label="所属区域" required>{(id) => <SelectBox id={id} value="所有区域" />}</Field>
            <Field label="行政区划" required>
              {(id) => (
                <div className="relative flex-1">
                  <input id={id} className={inputCls} defaultValue="浙江省 / 宁波市 / 江北区" />
                  <button type="button" aria-label="清除" className="absolute top-2 right-[7px] flex h-3 w-3 items-center justify-center rounded-full bg-[#bfbfbf] text-white">
                    <X className="h-2 w-2" strokeWidth={4} />
                  </button>
                </div>
              )}
            </Field>
            <Field label="详细地址" required className="w-[571px]">
              {(id) => (
                <>
                  <div className="w-[185px]"><input id={id} className={inputCls} defaultValue="浙江省宁波市江北区前江街" /></div>
                  <a href="#" className="ml-4 leading-7 text-[#2557e2]">若搜索定位不准，点击手动输入经纬度</a>
                </>
              )}
            </Field>
            <Field label="邮政编码">{(id) => <input id={id} className={inputCls} />}</Field>
            <Field label="门店类型">{(id) => <SelectBox id={id} value="加盟店" />}</Field>
          </div>
          <div className="flex gap-4">
            <Field label="门店业务" className="w-[571px]">
              {(id) => (
                <div className="flex items-center gap-3 text-black">
                  <label className="flex items-center gap-1">
                    <span className="relative flex h-4 w-4">
                      <input id={id} type="checkbox" defaultChecked className="peer h-4 w-4 appearance-none rounded border border-[#d9d9d9] bg-white checked:border-[#2557e2] checked:bg-[#2557e2]" />
                      <svg className="pointer-events-none absolute inset-0 h-4 w-4" viewBox="0 0 16 16" fill="none" stroke="#fff" strokeWidth="2"><path d="m4 8 3 3 5-6" /></svg>
                    </span>
                    线上业务
                  </label>
                  <label className="flex items-center gap-1">
                    <input type="checkbox" className="h-4 w-4 appearance-none rounded border border-[#d9d9d9] bg-white" />
                    财务业务
                  </label>
                </div>
              )}
            </Field>
            <Field label="企业性质">{(id) => <SelectBox id={id} value="" />}</Field>
            <Field label="注册名称">{(id) => <input id={id} className={inputCls} />}</Field>
          </div>
        </div>

        <div className="mt-[17px] flex">
          <span className="mr-2 w-[84px] shrink-0 text-right leading-3 text-[#262626]">地图</span>
          <div className="relative h-[502px] min-w-0 flex-1 overflow-hidden border-y border-l border-[#c9c9c9]">
            <StoreMap />
            <div className="absolute top-[187px] left-[912px] flex h-10 w-[394px] items-center bg-white pl-[10px] font-[Roboto,'Noto_Sans_CJK_SC',sans-serif] whitespace-nowrap text-black shadow">
              浙江省宁波市江北区前江街道金山路786弄绿地·U+未来中心
              <button type="button" aria-label="关闭" className="absolute top-[5px] right-1 text-[#a0a0a0]"><X className="h-[14px] w-[14px]" strokeWidth={3} /></button>
            </div>
          </div>
        </div>
      </div>

      <footer className="flex h-[39px] justify-center gap-4 border-t border-[#d6d6d6] pt-[7px] pl-[120px]">
        <button type="button" className="h-7 w-14 rounded border border-[#c9c9c9] text-black">取 消</button>
        <button type="button" className="h-7 w-14 rounded border border-[#c9c9c9] text-black">删 除</button>
        <button type="submit" className="h-7 w-14 rounded bg-[#2557e2] text-white">保 存</button>
        <button type="button" className="h-7 w-[94px] rounded bg-[#2557e2] text-white">保存并返回</button>
      </footer>
    </form>
  );
}

function CoordinateDialog() {
  return (
    <div className="absolute inset-0 flex items-start justify-center bg-black/30 pt-[98px] pl-[128px]">
      <div role="dialog" aria-labelledby="coord-title" className="w-[560px] rounded-lg bg-white p-3 shadow-[0_6px_24px_rgba(0,0,0,0.25)]">
        <div className="flex h-6 items-center justify-between">
          <h3 id="coord-title" className="text-base text-[#262626]">输入经纬度（仅支持高德经纬度）</h3>
          <button type="button" aria-label="关闭" className="-mr-[6px] text-[#8c8c8c]"><X className="h-[26px] w-[26px]" strokeWidth={1} /></button>
        </div>
        <div className="mt-3 flex items-center">
          <label htmlFor="lng" className="w-[156px] pl-[3px] whitespace-nowrap text-[#262626]">经度（数字大的那个）：</label>
          <input id="lng" className="h-7 flex-1 rounded border border-[#d9d9d9] px-2 text-black outline-none" defaultValue="121.46" />
        </div>
        <div className="relative mt-6 flex items-center">
          <label htmlFor="lat" className="w-[156px] pl-[3px] whitespace-nowrap text-[#262626]">纬度（数字小的那个）：</label>
          <input id="lat" className="h-7 flex-1 rounded border border-[#4a90fb] px-2 text-black shadow-[0_0_0_2px_#d6e4ff] outline-none" defaultValue="29.95" />
          <span className="absolute top-[5px] left-[200px] h-[18px] w-px bg-black" />
          <span className="absolute top-[2px] right-[2px] flex flex-col text-[#777]">
            <ChevronUp className="h-3 w-[14px]" strokeWidth={3} />
            <ChevronDown className="h-3 w-[14px]" strokeWidth={3} />
          </span>
        </div>
        <a href="#" className="mt-7 mb-10 block h-5 leading-5 text-[#2557e2]">点击前往高德官方坐标拾取页</a>
        <div className="flex justify-end gap-2">
          <button type="button" className="h-7 w-14 rounded border border-[#d0d0d0] text-black">取 消</button>
          <button type="button" className="h-7 w-14 rounded bg-[#2257e0] text-white">确 定</button>
        </div>
      </div>
    </div>
  );
}

function Annotations() {
  return (
    <svg className="pointer-events-none absolute top-0 left-0 h-[1280px] w-[2422px]" viewBox="0 0 2422 1280">
      <defs>
        <pattern id="wm" width="300" height="300" patternUnits="userSpaceOnUse">
          <g fill="#a4a4a4" fillOpacity=".1" fontSize="16">
            <text transform="translate(145 149) rotate(-27)" textAnchor="middle" dominantBaseline="central">曾庆昶0829</text>
            <text transform="translate(294 0) rotate(-27)" textAnchor="middle" dominantBaseline="central">曾庆昶0829</text>
            <text transform="translate(294 300) rotate(-27)" textAnchor="middle" dominantBaseline="central">曾庆昶0829</text>
            <text transform="translate(-6 300) rotate(-27)" textAnchor="middle" dominantBaseline="central">曾庆昶0829</text>
            <text transform="translate(-6 0) rotate(-27)" textAnchor="middle" dominantBaseline="central">曾庆昶0829</text>
          </g>
        </pattern>
      </defs>
      <rect width="2422" height="1280" fill="url(#wm)" />
      <rect x="1007.500" y="142.500" width="244" height="90" rx="4" fill="none" stroke="#ee4426" strokeWidth="3" />
      <g fill="#ee4426">
        <path d="M1276 235V237L1481 316 1477 319 1497 317 1484 302 1485 309Z" />
        <path d="M1495 360H1497L1391 1221 1396 1220 1385 1235 1379 1217 1384 1220Z" />
      </g>
    </svg>
  );
}

function ImeBar() {
  return (
    <div className="absolute right-0 bottom-[61px] flex h-[30px] items-center rounded-l-md bg-white pr-1 pl-[9px] text-black shadow-md">
      <svg className="h-[18px] w-[18px]" viewBox="0 0 18 18" fill="none" stroke="#fb7a14" strokeWidth="4"><path d="M17 2.500C10 2.500 3 2.500 3 5.500S15 8 15 12 7 15.500 1 15.500" /></svg>
      <span className="mx-[9px] h-5 w-px bg-[#d9d9d9]" />
      <span className="text-lg font-medium">中</span>
      <svg className="ml-3 h-4 w-3" viewBox="0 0 12 16"><circle cx="3" cy="4" r="2.200" fill="none" stroke="#111" strokeWidth="1.500" /><path d="M7 11a2 2 0 1 1 3.500 1L8 15Z" fill="#111" /></svg>
      <svg className="ml-3 h-[18px] w-[18px]" viewBox="0 0 18 18" fill="none" stroke="#111" strokeWidth="1.500" strokeLinecap="round">
        <path d="M13.500 2.500A8 8 0 1 0 17 9M5.500 10.500c1.500 3 5.500 3 7 0M6.500 6.500v.5M11.500 6.500v.5M16 3v3M14.500 4.500h3" />
      </svg>
      <svg className="ml-4 h-[18px] w-[14px]" viewBox="0 0 14 18" fill="none" stroke="#111" strokeWidth="1.500" strokeLinecap="round">
        <path d="M7 1a3 3 0 0 1 3 3v5a3 3 0 0 1-6 0V4a3 3 0 0 1 3-3ZM1 9a6 6 0 0 0 12 0M7 15v2.500" />
      </svg>
    </div>
  );
}

export default function App() {
  return (
    <div className="relative flex min-h-screen flex-col overflow-hidden bg-[#f1f4f9] font-['Noto_Sans_CJK_SC',sans-serif] text-sm">
      <Header />
      <div className="flex flex-1">
        <Sidebar />
        <main className="flex min-w-0 flex-1 flex-col">
          <div className="flex h-9 items-end gap-[6px]">
            <a href="#" className="flex h-7 w-[84px] items-center gap-[3px] rounded-t border-b border-[#d6d6d6] bg-[#fafafa] pl-2 text-[#999]">
              档案首页<X className="h-[14px] w-[14px]" strokeWidth={3} />
            </a>
            <a href="#" className="flex h-7 w-[84px] items-center gap-[3px] rounded-t bg-white pl-2 text-black">
              门店管理<X className="h-[14px] w-[14px]" strokeWidth={3} />
            </a>
          </div>
          <div className="flex flex-1 flex-col bg-white">
            <div className="mt-[13px] flex h-5 items-center pl-3 text-[#8f8f8f]">
              <ChevronLeft className="mr-[2px] h-[18px] w-[18px]" />
              <a href="#">返回</a>
              <span className="mx-3 h-3 w-px bg-[#d6d6d6]" />
              <a href="#">门店管理</a>
              <span className="mx-[6px]">/</span>
              <span className="font-medium text-[#262626]">编辑门店</span>
            </div>
            <div className="mt-[9px] ml-3 flex h-[31px] gap-10 border-b border-[#d6d6d6]">
              <button type="button" className="-mb-px border-b-2 border-[#2557e2] text-[#2557e2]">基础门店</button>
              <button type="button" className="text-black">线上门店</button>
            </div>
            <StoreForm />
          </div>
        </main>
      </div>
      <CoordinateDialog />
      <div className="absolute bottom-[-3px] left-[388px] border border-[#767676] bg-white px-[6px] text-[12px] leading-[18px] text-[#575757] shadow-[3px_3px_2px_rgba(0,0,0,0.4)]">
        计算器
      </div>
      <ImeBar />
      <Annotations />
    </div>
  );
}
